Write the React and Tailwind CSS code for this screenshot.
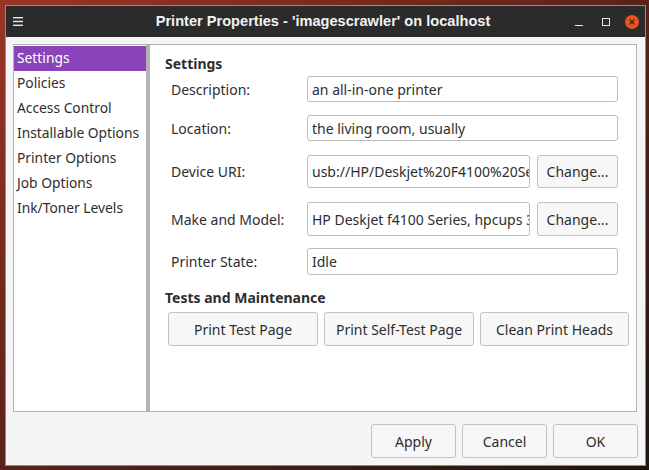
import React from 'react'

const FONT = { fontFamily: '"Noto Sans", "DejaVu Sans", sans-serif' }

const entryCls = 'h-[26px] flex items-center px-[4px] bg-white border border-[#bcbcbc] rounded-[3px] overflow-hidden whitespace-nowrap text-[14px] text-[#2e2e2e]'
const btnCls = 'flex items-center justify-center bg-[#f7f7f7] border border-[#c2c2c2] rounded-[3px] text-[14px] text-[#2e2e2e] whitespace-nowrap'

const pages = ['Settings', 'Policies', 'Access Control', 'Installable Options', 'Printer Options', 'Job Options', 'Ink/Toner Levels']

function Row({ label, children, className = '' }) {
  return (
    <div className={`flex items-center ${className}`}>
      <div className="w-[157px] shrink-0 pl-[21px] text-[14px] text-[#2e2e2e]">{label}</div>
      <div className="flex items-center gap-[7px]">{children}</div>
    </div>
  )
}

export default function App() {
  return (
    <div className="w-[649px] h-[470px] overflow-hidden bg-gradient-to-br from-[#9b3526] via-[#5a2218] to-[#1e140e] pt-[5px] pl-[5px]" style={FONT}>
      <div className="w-[641px] h-[461px] border border-[#8e8e8e] bg-[#f5f5f5] flex flex-col">
        {/* title bar */}
        <div className="h-[31px] bg-[#2b2b2b] flex items-center relative">
          <svg width="10" height="9" viewBox="0 0 10 9" className="ml-[7px]">
            <rect x="0" y="0" width="10" height="1.4" fill="#e8e8e8" />
            <rect x="0" y="3.8" width="10" height="1.4" fill="#e8e8e8" />
            <rect x="0" y="7.6" width="10" height="1.4" fill="#e8e8e8" />
          </svg>
          <div className="absolute left-0 right-0 top-0 h-[31px] flex items-center justify-center pointer-events-none">
            <span className="text-[14.6px] font-bold text-[#f2f2f2] -ml-[5px]" style={{ fontFamily: '"Liberation Sans", Arial, sans-serif' }}>
              Printer Properties - 'imagescrawler' on localhost
            </span>
          </div>
          <div className="flex-1"></div>
          <div className="flex items-center mr-[6px]">
            <div className="w-[8px] h-[1.5px] bg-[#e8e8e8] mt-[8px] mr-[19px]"></div>
            <div className="w-[8px] h-[8px] border-[1.5px] border-[#e8e8e8] mr-[15px]"></div>
            <div className="w-[14px] h-[14px] rounded-full bg-[#e9541f] flex items-center justify-center">
              <svg width="6" height="6" viewBox="0 0 6 6">
                <path d="M0.5 0.5 L5.5 5.5 M5.5 0.5 L0.5 5.5" stroke="#3a1a10" strokeWidth="1.1" />
              </svg>
            </div>
          </div>
        </div>

        {/* body */}
        <div className="flex-1 flex flex-col px-[7px] pt-[7px] pb-[7px]">
          <div className="flex h-[368px]">
            <div className="w-[135px] bg-white border border-[#b3b3b3] border-r-[2px] pt-[1px]">
              {pages.map((p, i) => (
                <div key={p} className={`h-[25px] flex items-center pl-[3px] text-[13.8px] ${i === 0 ? 'bg-[#8a43bb] text-white' : 'text-[#2e2e2e]'}`}>{p}</div>
              ))}
            </div>
            <div className="flex-1 bg-white border border-[#b3b3b3] border-l-[2px] mr-[1px] flex flex-col">
              <div className="pl-[15px] pt-[8px] h-[30px] text-[14px] font-bold text-[#2e2e2e]">Settings</div>
              <div className="flex flex-col">
                <Row label="Description:" className="mt-[1px]">
                  <div className={`${entryCls} w-[311px]`}>an all-in-one printer</div>
                </Row>
                <Row label="Location:" className="mt-[13px]">
                  <div className={`${entryCls} w-[311px]`}>the living room, usually</div>
                </Row>
                <Row label="Device URI:" className="mt-[14px]">
                  <div className={`${entryCls} w-[223px] h-[33px]`}>usb://HP/Deskjet%20F4100%20Series?serial=CN9AH4Q0KD05BR</div>
                  <div className={`${btnCls} w-[81px] h-[33px]`}>Change...</div>
                </Row>
                <Row label="Make and Model:" className="mt-[14px]">
                  <div className={`${entryCls} w-[223px] h-[34px]`}>HP Deskjet f4100 Series, hpcups 3.22.10</div>
                  <div className={`${btnCls} w-[81px] h-[34px]`}>Change...</div>
                </Row>
                <Row label="Printer State:" className="mt-[12px]">
                  <div className={`${entryCls} w-[311px] h-[27px]`}>Idle</div>
                </Row>
              </div>
              <div className="pl-[15px] mt-[12px] text-[14px] font-bold text-[#2e2e2e]">Tests and Maintenance</div>
              <div className="flex gap-[6px] pl-[18px] mt-[4px]">
                <div className={`${btnCls} w-[150px] h-[34px]`}>Print Test Page</div>
                <div className={`${btnCls} w-[150px] h-[34px]`}>Print Self-Test Page</div>
                <div className={`${btnCls} w-[149px] h-[34px]`}>Clean Print Heads</div>
              </div>
            </div>
          </div>
          <div className="flex justify-end gap-[6px] mt-[12px]">
            <div className={`${btnCls} w-[85px] h-[34px]`}>Apply</div>
            <div className={`${btnCls} w-[85px] h-[34px]`}>Cancel</div>
            <div className={`${btnCls} w-[85px] h-[34px]`}>OK</div>
          </div>
        </div>
      </div>
    </div>
  )
}
